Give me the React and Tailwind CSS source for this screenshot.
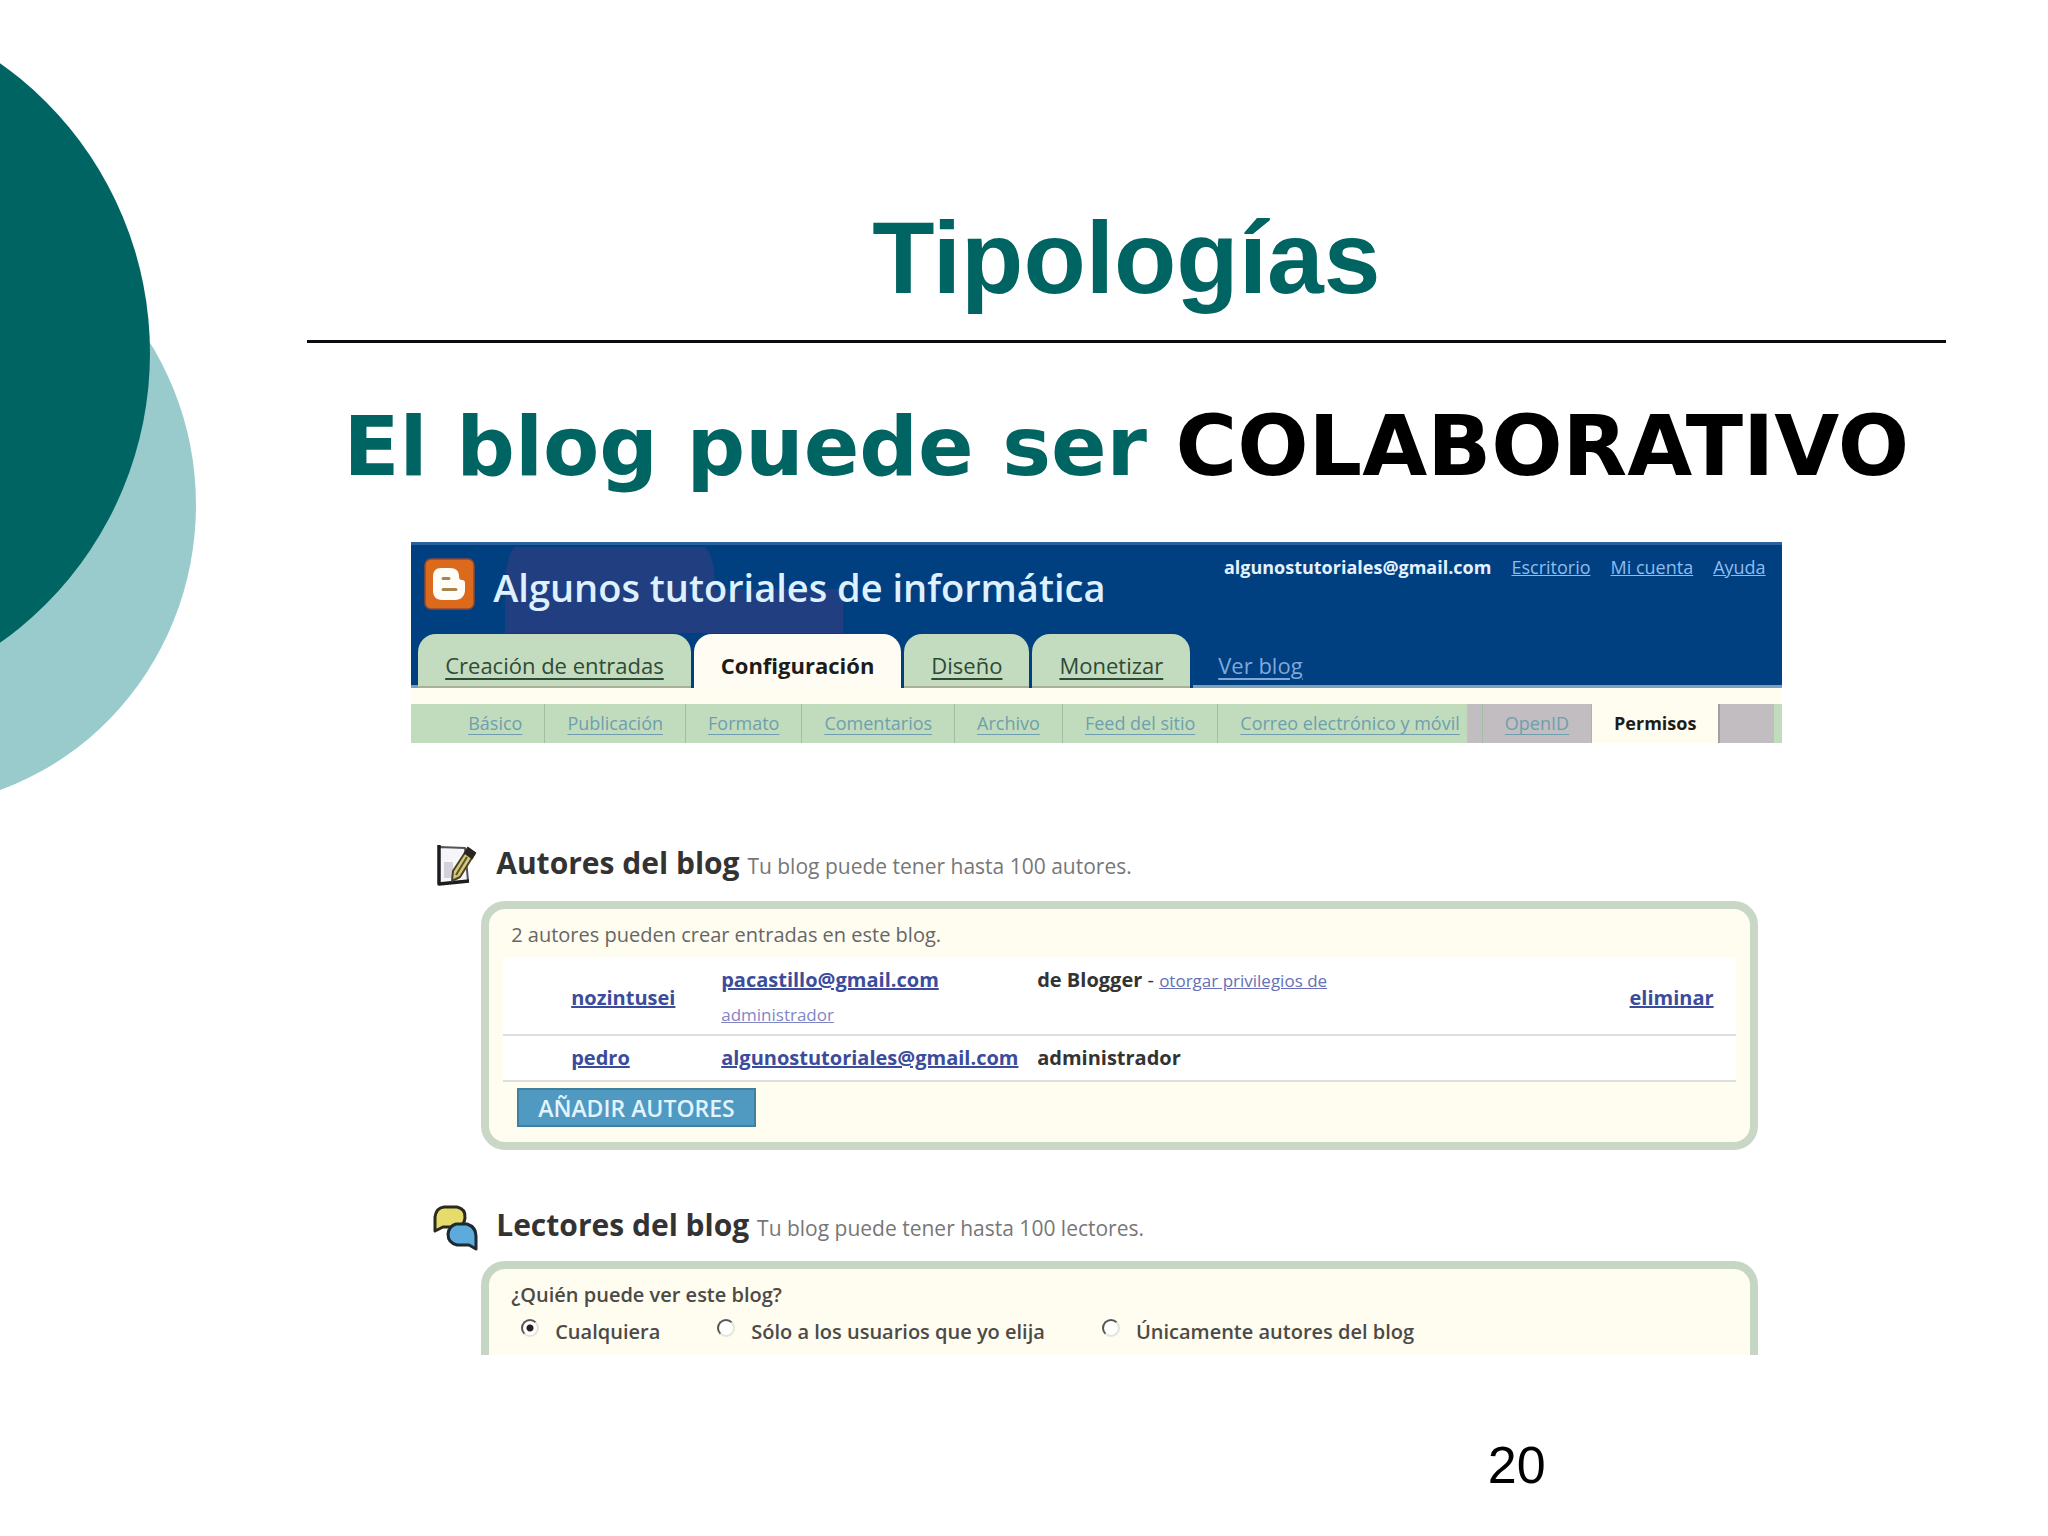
const tabs = [
  { label: 'Creación de entradas' },
  { label: 'Configuración', active: true },
  { label: 'Diseño' },
  { label: 'Monetizar' },
];

const sections = [
  'Básico',
  'Publicación',
  'Formato',
  'Comentarios',
  'Archivo',
  'Feed del sitio',
  'Correo electrónico y móvil',
  'OpenID',
];

const readers = [
  { id: 'anyone', label: 'Cualquiera' },
  { id: 'chosen', label: 'Sólo a los usuarios que yo elija' },
  { id: 'authors', label: 'Únicamente autores del blog' },
];

const Circles = () => (
  <svg className="absolute left-0 top-0" width="200" height="820" viewBox="0 0 200 820" aria-hidden="true">
    <ellipse cx="-97" cy="505" rx="293" ry="302" fill="#99cbcc" />
    <circle cx="-205" cy="353" r="355" fill="#006562" />
  </svg>
);

const BloggerLogo = () => (
  <svg className="shrink-0" width="51" height="52" viewBox="0 0 51 52" aria-hidden="true">
    <rect x="1" y="1" width="49" height="50" rx="6" fill="#dc6a1c" stroke="#8a4a3a" strokeWidth="1.500" />
    <path
      d="M17 10h9c7 0 9 4 9 8 0 3 1 4 3 4s3 1 3 3v7c0 6-4 10-10 10H18c-6 0-9-4-9-9V19c0-6 3-9 8-9z"
      fill="#fffdf8"
    />
    <path d="M19 20.500h6M19 31.500h13" stroke="#a8854f" strokeWidth="3" strokeLinecap="round" />
  </svg>
);

const NotepadIcon = () => (
  <svg className="shrink-0" width="46" height="46" viewBox="0 0 46 46" aria-hidden="true">
    <path d="M6 5l26 1 3 33-29 3z" fill="#f6f5f8" stroke="#55525c" strokeWidth="2" strokeLinejoin="round" />
    <path d="M6 3L6 42l30-3" fill="none" stroke="#1d1b20" strokeWidth="3.500" strokeLinejoin="round" />
    <path d="M11 20h9v16h-9z" fill="#d3d2dc" />
    <path d="M35 6l7 5-15 24-8 4 1-10z" fill="#d6c97a" stroke="#4a4328" strokeWidth="2" strokeLinejoin="round" />
    <path d="M35 6l7 5-3 5-7-5z" fill="#2a2622" stroke="#2a2622" strokeWidth="2" />
    <path d="M34 15L23 33" stroke="#5c5230" strokeWidth="2" />
  </svg>
);

const BubblesIcon = () => (
  <svg className="shrink-0" width="46" height="48" viewBox="0 0 46 48" aria-hidden="true">
    <path
      d="M11 4h13q9 2 8 11-1 9-9 9H10l-8 4V14Q3 5 11 4z"
      fill="#e6dc6c"
      stroke="#2b2a1d"
      strokeWidth="3"
      strokeLinejoin="round"
    />
    <path
      d="M23 21h11q9 3 9 12v13l-7-4H24q-9-2-9-11 1-8 8-10z"
      fill="#5cabdb"
      stroke="#1d2a33"
      strokeWidth="3"
      strokeLinejoin="round"
    />
  </svg>
);

const BlogHeader = () => (
  <header className="relative border-t-3 border-[#2a619c] bg-[#003f80] pt-[13px]">
    <svg className="absolute left-[90px] top-[2px]" width="344" height="86" viewBox="0 0 344 86" aria-hidden="true">
      <path d="M14 0h190q10 10 10 42h128v44H4V42Q4 10 14 0z" fill="#213f80" />
    </svg>
    <div className="relative flex h-[52px] pl-[13px] pr-4">
      <BloggerLogo />
      <h2 className="ml-[18px] text-[38px] font-semibold leading-[58px] text-[#dff1ff]">
        Algunos tutoriales de informática
      </h2>
      <nav className="ml-auto flex gap-5 text-[18px] leading-[18px] text-[#8dbcf0]">
        <b className="text-[#e4f2ff]">algunostutoriales@gmail.com</b>
        <a href="#escritorio" className="underline">Escritorio</a>
        <a href="#cuenta" className="underline">Mi cuenta</a>
        <a href="#ayuda" className="underline">Ayuda</a>
      </nav>
    </div>
    <nav className="relative mt-6 flex h-[54px] text-[22px] leading-[42px]">
      <span className="w-[7px] border-b-3 border-[#7d9fb8]" />
      {tabs.map((tab) => (
        <a
          key={tab.label}
          href="#tab"
          className={
            tab.active
              ? 'mr-[3px] rounded-t-[18px] bg-[#fffcf3] px-[27px] pt-[10px] font-bold text-[#1c1c1c]'
              : 'mr-[3px] rounded-t-[18px] border-b-2 border-[#a8b098] bg-[#c3dcbf] px-[27px] pt-[10px] text-[#2f4a35] underline underline-offset-4'
          }
        >
          {tab.label}
        </a>
      ))}
      <div className="flex-1 border-b-3 border-[#7d9fb8] pl-[25px] pt-[10px]">
        <a href="#blog" className="text-[#7fa9dc] underline underline-offset-4">Ver blog</a>
      </div>
    </nav>
  </header>
);

const SubNav = () => (
  <nav className="flex border-t-[16px] border-[#fffcf0] bg-[linear-gradient(to_right,#c0dcbd_77%,#c1bdc0_77%,#c1bdc0_99.4%,#c0dcbd_99.4%)] pl-[35px] text-[18px] leading-[39px] text-[#6f9fae]">
    {sections.map((name) => (
      <a key={name} href="#seccion" className="border-r border-[#a3bda3] px-[22px] underline underline-offset-4">
        {name}
      </a>
    ))}
    <a href="#permisos" className="border-r-2 border-[#a3a0a2] bg-[#fffcf0] px-[22px] font-bold text-[#1c1c1c]">Permisos</a>
  </nav>
);

const SectionTitle = ({ icon, title, note }) => (
  <div className="flex items-center gap-[17px] pl-[22px]">
    {icon}
    <h3 className="text-[30px] font-bold leading-[46px] text-[#333]">
      {title} <span className="text-[21px] font-normal text-[#777]">{note}</span>
    </h3>
  </div>
);

const Authors = () => (
  <section className="ml-[70px] mr-6 mt-3 rounded-[24px] border-8 border-[#c8d7c6] bg-[#fffcf0] px-[14px] pb-[15px]">
    <p className="pb-1 pl-2 pt-2 text-[20px] leading-[36px] text-[#666]">
      2 autores pueden crear entradas en este blog.
    </p>
    <table className="w-full border-collapse bg-white text-left text-[20px] font-bold text-[#3c4c9c]">
      <tbody>
        <tr className="h-[78px] border-b-2 border-[#dcdfe0]">
          <td className="w-[218px] pl-[68px] pt-1"><a href="#nozintusei" className="underline">nozintusei</a></td>
          <td className="w-[316px] pt-1 leading-[34px]">
            <a href="#correo" className="underline">pacastillo@gmail.com</a>
            <br />
            <a href="#administrador" className="text-[17px] font-normal text-[#7f86c6] underline">administrador</a>
          </td>
          <td className="align-top leading-[46px] text-[#333]">
            de Blogger <span className="font-normal">- </span>
            <a href="#privilegios" className="text-[17px] font-normal text-[#6570b8] underline">
              otorgar privilegios de
            </a>
          </td>
          <td className="pr-[22px] pt-1 text-right"><a href="#eliminar" className="underline">eliminar</a></td>
        </tr>
        <tr className="h-[46px] border-b-2 border-[#dcdfe0]">
          <td className="pl-[68px]"><a href="#pedro" className="underline">pedro</a></td>
          <td><a href="#correo" className="underline">algunostutoriales@gmail.com</a></td>
          <td className="text-[#333]">administrador</td>
          <td />
        </tr>
      </tbody>
    </table>
    <button
      type="button"
      className="ml-[14px] mt-[6px] block h-[39px] border-2 border-[#3f7f9f] bg-[#5099c1] px-[19px] text-[23px] font-semibold leading-[34px] text-[#e2f4ff]"
    >
      AÑADIR AUTORES
    </button>
  </section>
);

const Readers = () => (
  <fieldset className="ml-[70px] mr-6 mt-[10px] rounded-t-[24px] border-8 border-b-0 border-[#c5d7c4] bg-[#fffcf0] pl-[22px] pt-[6px] text-[20px] font-semibold text-[#4c4a46]">
    <p className="leading-[40px]">¿Quién puede ver este blog?</p>
    <div className="flex gap-[57px] pb-[6px] pl-[10px] leading-[34px]">
      {readers.map((reader) => (
        <label key={reader.id} htmlFor={reader.id} className="flex items-start gap-4">
          <input
            id={reader.id}
            type="radio"
            name="lectores"
            defaultChecked={reader.id === 'anyone'}
            className="mt-1 h-[18px] w-[18px] appearance-none rounded-full border-2 border-[#555] border-b-[#e6e3d8] border-r-[#e6e3d8] bg-white checked:bg-[radial-gradient(#222_3px,#fff_4px)]"
          />
          {reader.label}
        </label>
      ))}
    </div>
  </fieldset>
);

const App = () => {
  return (
    <div className="relative min-h-screen overflow-hidden bg-white">
      <Circles />
      <main className="relative pl-[15%] pr-[5%] pt-[198px]">
        <h1 className="border-b-3 border-[#0a0a10] pb-[22px] text-center font-['Liberation_Sans',sans-serif] text-[102px] font-bold leading-[120px] text-[#006562]">
          Tipologías
        </h1>
        <p className="mt-[53px] whitespace-nowrap text-center font-['DejaVu_Sans',sans-serif] text-[82px] font-bold leading-[100px] text-[#006562]">
          El blog puede ser <span className="text-[84px] text-black">COLABORATIVO</span>
        </p>
        <div className="ml-[104px] mr-[164px] mt-[45px] font-['Open_Sans',sans-serif]">
          <BlogHeader />
          <SubNav />
          <div className="mt-[97px]">
            <SectionTitle
              icon={<NotepadIcon />}
              title="Autores del blog"
              note="Tu blog puede tener hasta 100 autores."
            />
            <Authors />
          </div>
          <div className="mt-[52px]">
            <SectionTitle
              icon={<BubblesIcon />}
              title="Lectores del blog"
              note="Tu blog puede tener hasta 100 lectores."
            />
            <Readers />
          </div>
        </div>
        <footer className="mt-20 pr-[400px] text-right font-['Liberation_Sans',sans-serif] text-[52px] leading-[60px] text-black">
          20
        </footer>
      </main>
    </div>
  );
};

export default App;
